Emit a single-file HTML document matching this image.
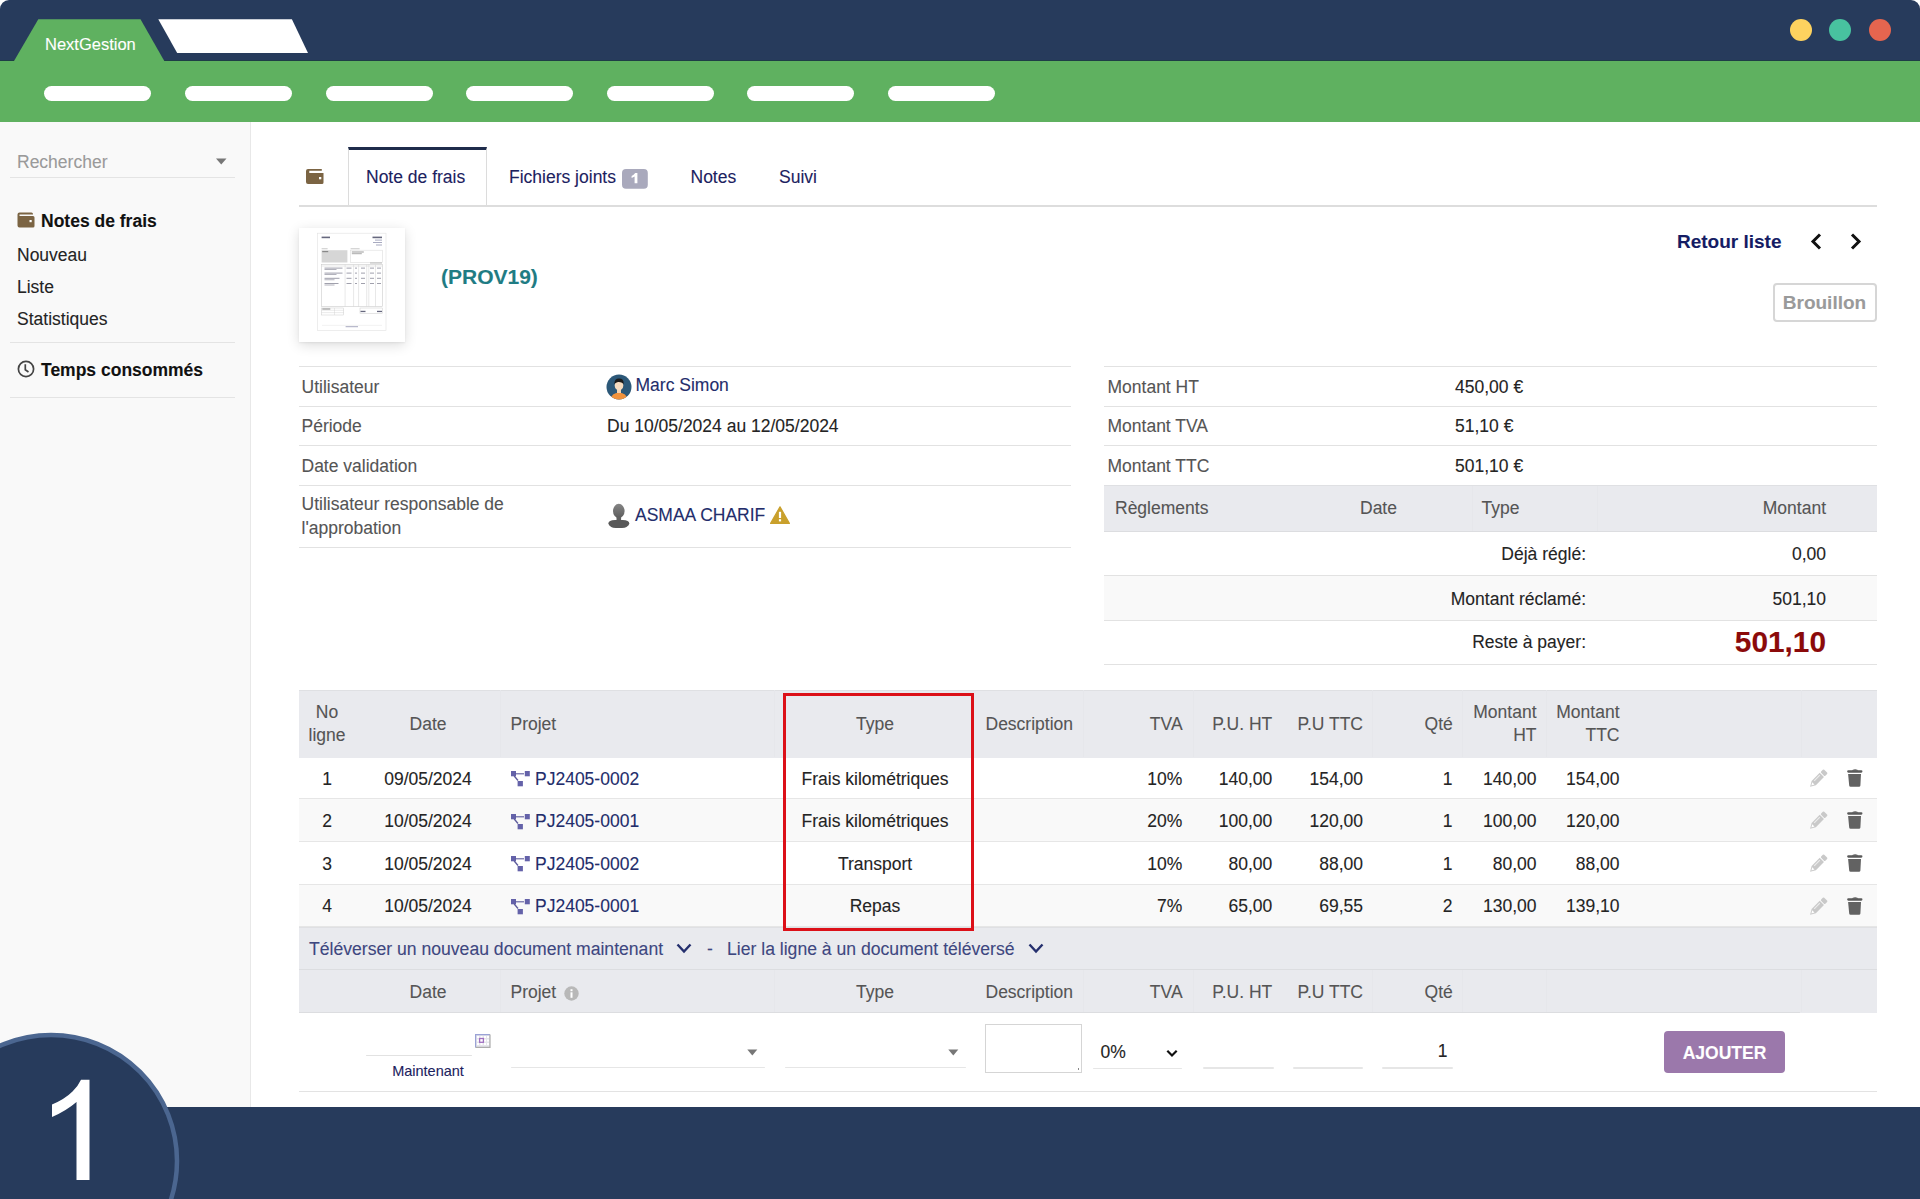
<!DOCTYPE html>
<html><head><meta charset="utf-8">
<style>
*{margin:0;padding:0;box-sizing:border-box}
html,body{width:1920px;height:1199px;overflow:hidden;background:#fff}
body{font-family:"Liberation Sans",sans-serif;font-size:17.5px;color:#222;position:relative;-webkit-text-stroke:0.1px currentColor}
.a{position:absolute;white-space:nowrap;line-height:1}
div.a:not([style*="height"]){padding-top:1.3px}
.navy{background:#273b5c}
#top{position:absolute;left:0;top:0;width:1920px;height:62px;background:#273b5c;border-radius:9px 9px 0 0}
#green{position:absolute;left:0;top:61px;width:1920px;height:61px;background:#5fb160}
.pill{position:absolute;top:86px;width:107px;height:15px;border-radius:8px;background:#fff}
.dot{position:absolute;top:19px;width:22px;height:22px;border-radius:50%}
#side{position:absolute;left:0;top:122px;width:251px;height:985px;background:#f9f9f9;border-right:1px solid #e8e8e8}
#bottom{position:absolute;left:0;top:1107px;width:1920px;height:92px;background:#273b5c}
.hl{position:absolute;height:1px;background:#e2e2e2}
.lbl{color:#555}
.lnk{color:#232d6b}
.hdr{position:absolute;background:#e9eaee}
.r{text-align:right}
.c{text-align:center}
</style></head><body>
<div id="top"></div>
<div id="green"></div>
<div class="hl" style="left:0;top:60px;width:1920px;background:#1e3d46"></div>
<svg class="a" style="left:0;top:0" width="320" height="62">
<polygon points="14,61 38.3,19.2 140.5,19.2 164.3,61" fill="#5fb160"/>
<polygon points="158.3,19.2 291.9,19.2 308,53.1 177.2,53.1" fill="#fff"/>
</svg>
<div class="a" style="left:45px;top:35px;font-size:16.5px;color:#fff">NextGestion</div>
<div class="pill" style="left:44px"></div>
<div class="pill" style="left:185px"></div>
<div class="pill" style="left:326px"></div>
<div class="pill" style="left:466px"></div>
<div class="pill" style="left:607px"></div>
<div class="pill" style="left:747px"></div>
<div class="pill" style="left:888px"></div>
<div class="dot" style="left:1790px;background:#fdd25f"></div>
<div class="dot" style="left:1829px;background:#48c29f"></div>
<div class="dot" style="left:1869px;background:#e5654f"></div>

<div id="side"></div>
<div class="a" style="left:17px;top:152.5px;color:#9a9a9a">Rechercher</div>
<svg class="a" style="left:216px;top:158px" width="11" height="7"><polygon points="0,0.5 10.5,0.5 5.25,6.5" fill="#777"/></svg>
<div class="hl" style="left:10px;top:177px;width:225px;background:#e4e4e4"></div>
<svg class="a" style="left:17px;top:212px" width="18" height="16" viewBox="0 0 18 16"><path d="M2.5,0.5 h12 a1.5,1.5 0 0 1 1.5,1.5 v0.5 h-13.5 v1.5 h13.5 a1.5 1.5 0 0 1 1.5 1.5 v8.5 a1.5 1.5 0 0 1 -1.5 1.5 h-13.5 a2 2 0 0 1 -2 -2 v-11 a2 2 0 0 1 2 -2z" fill="#7b6443"/><rect x="12.5" y="8" width="2.2" height="2.2" fill="#fff"/></svg>
<div class="a" style="left:41px;top:211.4px;font-weight:bold;color:#111">Notes de frais</div>
<div class="a" style="left:17px;top:245.7px;color:#242424">Nouveau</div>
<div class="a" style="left:17px;top:277.6px;color:#242424">Liste</div>
<div class="a" style="left:17px;top:309.3px;color:#242424">Statistiques</div>
<div class="hl" style="left:10px;top:342px;width:225px;background:#e4e4e4"></div>
<svg class="a" style="left:17px;top:360px" width="18" height="18" viewBox="0 0 18 18"><circle cx="9" cy="9" r="7.6" fill="none" stroke="#444" stroke-width="1.7"/><path d="M8.3,4.2 v5.6 l3.2,2.2" fill="none" stroke="#444" stroke-width="1.7"/></svg>
<div class="a" style="left:41px;top:360.9px;font-weight:bold;color:#111">Temps consommés</div>
<div class="hl" style="left:10px;top:397px;width:225px;background:#e4e4e4"></div>

<!-- TABS -->
<svg class="a" style="left:306px;top:168.8px" width="18" height="16" viewBox="0 0 18 16"><path d="M2,0 h13.8 v1.8 h-12.5 v2.2 h14.2 v9.5 a1.5 1.5 0 0 1 -1.5 1.5 h-14 a2 2 0 0 1 -2 -2 v-11 a2 2 0 0 1 2 -2z" fill="#7b6443"/><rect x="13" y="8" width="2.3" height="2.3" fill="#fff"/></svg>
<div class="a" style="left:348px;top:147px;width:139px;height:59px;border:1px solid #dcdcdc;border-top:3px solid #1f2c4b;border-bottom:none;background:#fff"></div>
<div class="hl" style="left:299px;top:204.5px;width:1578px;height:2px;background:#dddddd"></div>
<div class="a" style="left:366px;top:167.6px;color:#1c2260">Note de frais</div>
<div class="a" style="left:509px;top:167.4px;color:#1c2260">Fichiers joints</div>
<svg class="a" style="left:621.8px;top:168.8px" width="26" height="20" viewBox="0 0 26 20"><rect x="0" y="0" width="25.8" height="19.8" rx="4" fill="#a9a9bc"/><path d="M13.2,4 H15.4 V14.2 H12.6 V7.6 Q11.2,8.5 9.6,8.9 V7 Q11.8,6.2 13.2,4z" fill="#fff"/></svg>
<div class="a" style="left:690.5px;top:167.4px;color:#1c2260">Notes</div>
<div class="a" style="left:779px;top:167.4px;color:#1c2260">Suivi</div>

<!-- HEADER -->
<div class="a" style="left:299px;top:228px;width:106px;height:114px;background:#fff;box-shadow:0 3px 12px rgba(0,0,0,0.14),0 1px 2px rgba(0,0,0,0.06)"></div>
<svg class="a" style="left:299px;top:228px" width="106" height="114" viewBox="299 228 106 114">
<rect x="317.6" y="233.2" width="68.4" height="97.4" fill="#fff" stroke="#e2e2e2" stroke-width="0.6"/>
<rect x="321.6" y="236.6" width="8.4" height="1.6" fill="#66687e"/>
<rect x="372.5" y="236.6" width="9.5" height="1.6" fill="#66687e"/>
<rect x="375" y="239.6" width="7" height="1" fill="#a8aac0"/>
<rect x="373" y="242" width="9" height="1" fill="#a8aac0"/>
<rect x="376" y="244.5" width="6" height="1" fill="#a8aac0"/>
<rect x="321.6" y="248.4" width="6" height="0.8" fill="#bbb"/>
<rect x="350.6" y="248.4" width="9" height="0.8" fill="#bbb"/>
<rect x="321.6" y="250.2" width="25.8" height="12.3" fill="#d6d6d6"/>
<rect x="322.2" y="251" width="6" height="1.2" fill="#888"/>
<rect x="350.6" y="250.2" width="31.8" height="12.3" fill="none" stroke="#ddd" stroke-width="0.6"/>
<rect x="351.8" y="251.5" width="12" height="1" fill="#999"/>
<rect x="351.8" y="253.2" width="10" height="1" fill="#aaa"/>
<rect x="321.6" y="264.6" width="60.8" height="41.8" fill="none" stroke="#ccc" stroke-width="0.6"/>
<path d="M345.1,264.6 V306.4 M353.6,264.6 V306.4 M358.6,264.6 V306.4 M366.7,264.6 V306.4 M368.8,264.6 V306.4 M375.5,264.6 V306.4 M321.6,266 H382.4" stroke="#d0d0d0" stroke-width="0.5"/>
<rect x="370" y="262.6" width="12" height="0.8" fill="#aaa"/>
<g fill="#a0a0ac">
<rect x="324.5" y="267.6" width="18" height="1"/><rect x="324.5" y="269.2" width="12" height="0.8"/><rect x="346.5" y="267.6" width="5" height="1"/><rect x="355" y="267.6" width="2" height="1"/><rect x="361" y="267.6" width="4" height="1"/><rect x="370" y="267.6" width="4" height="1"/><rect x="377" y="267.6" width="4" height="1"/>
<rect x="324.5" y="272.6" width="18" height="1"/><rect x="324.5" y="274.2" width="12" height="0.8"/><rect x="346.5" y="272.6" width="5" height="1"/><rect x="355" y="272.6" width="2" height="1"/><rect x="361" y="272.6" width="4" height="1"/><rect x="370" y="272.6" width="4" height="1"/><rect x="377" y="272.6" width="4" height="1"/>
<rect x="324.5" y="277.8" width="15" height="1"/><rect x="324.5" y="279.4" width="10" height="0.8"/><rect x="346.5" y="277.8" width="5" height="1"/><rect x="355" y="277.8" width="2" height="1"/><rect x="361" y="277.8" width="4" height="1"/><rect x="370" y="277.8" width="4" height="1"/><rect x="377" y="277.8" width="4" height="1"/>
<rect x="324.5" y="283" width="14" height="1"/><rect x="324.5" y="284.6" width="10" height="0.8"/><rect x="346.5" y="283" width="5" height="1"/><rect x="355" y="283" width="2" height="1"/><rect x="361" y="283" width="4" height="1"/><rect x="370" y="283" width="4" height="1"/><rect x="377" y="283" width="4" height="1"/>
</g>
<rect x="321.6" y="308" width="22" height="7" fill="none" stroke="#ccc" stroke-width="0.5"/>
<path d="M334.5,308 V315 M321.6,310.3 H343.6 M321.6,312.6 H343.6" stroke="#ccc" stroke-width="0.4"/>
<rect x="322.3" y="308.5" width="8" height="1" fill="#888"/>
<rect x="360" y="308" width="22.5" height="5.5" fill="none" stroke="#ccc" stroke-width="0.5"/>
<rect x="360.5" y="310.8" width="5" height="1.3" fill="#66687e"/><rect x="377" y="310.8" width="5" height="1.3" fill="#66687e"/>
<path d="M322,325.4 H382" stroke="#e0e0e0" stroke-width="0.4"/>
<rect x="345.6" y="326.2" width="12.4" height="1" fill="#a8aac0"/>
</svg>
<div class="a" style="left:441px;top:264.4px;font-size:21px;font-weight:bold;color:#1f7c84">(PROV19)</div>
<div class="a" style="left:1677px;top:231.2px;font-size:19px;font-weight:bold;color:#151c64">Retour liste</div>
<svg class="a" style="left:1808px;top:231px" width="60" height="20"><path d="M12,3.5 L5,10.5 L12,17.5" fill="none" stroke="#111" stroke-width="3"/><path d="M44,3.5 L51,10.5 L44,17.5" fill="none" stroke="#111" stroke-width="3"/></svg>
<div class="a" style="left:1773px;top:283px;width:104px;height:39px;border:2px solid #d6d6d6;border-radius:4px"></div>
<div class="a" style="left:1782.8px;top:292.2px;font-size:19px;font-weight:bold;color:#9a9a9a">Brouillon</div>

<!-- LEFT INFO TABLE -->
<div class="hl" style="left:299px;top:366px;width:772px"></div>
<div class="hl" style="left:299px;top:405.5px;width:772px"></div>
<div class="hl" style="left:299px;top:445px;width:772px"></div>
<div class="hl" style="left:299px;top:484.5px;width:772px"></div>
<div class="hl" style="left:299px;top:547px;width:772px"></div>
<div class="a lbl" style="left:301.5px;top:378px">Utilisateur</div>
<div class="a lbl" style="left:301.5px;top:417px">Période</div>
<div class="a lbl" style="left:301.5px;top:456.5px">Date validation</div>
<div class="a lbl" style="left:301.5px;top:494.8px">Utilisateur responsable de</div>
<div class="a lbl" style="left:301.5px;top:518.7px">l'approbation</div>
<svg class="a" style="left:606px;top:373.5px" width="26" height="26" viewBox="0 0 26 26"><defs><clipPath id="cc"><circle cx="13" cy="13" r="12.5"/></clipPath></defs><circle cx="13" cy="13" r="12.5" fill="#2c5878"/><g clip-path="url(#cc)"><path d="M4,27 Q5,19 13,18.5 Q21,19 22,27z" fill="#f0923c"/><rect x="11" y="15" width="4" height="4" fill="#f4d2b0"/><ellipse cx="13" cy="11.5" rx="4.3" ry="5" fill="#f6dcc0"/><path d="M8.3,10 Q8.5,4.5 13,4.6 Q17.8,4.5 17.7,10 Q15,7.5 12,8 Q10,8.5 8.3,10z" fill="#1b1b1b"/></g></svg>
<div class="a lnk" style="left:635.5px;top:376.2px">Marc Simon</div>
<div class="a" style="left:607px;top:416.8px;color:#242424">Du 10/05/2024 au 12/05/2024</div>
<svg class="a" style="left:607px;top:503px" width="24" height="26" viewBox="0 0 24 26"><defs><linearGradient id="pg" x1="0" y1="0" x2="0" y2="1"><stop offset="0" stop-color="#858585"/><stop offset="1" stop-color="#5c5c5c"/></linearGradient></defs><ellipse cx="11.8" cy="8" rx="5.8" ry="7.2" fill="url(#pg)"/><rect x="9.5" y="13" width="4.6" height="5" fill="#606060"/><path d="M1.4,20.5 Q1.4,16.9 8,16.9 H15.7 Q22.3,16.9 22.3,20.5 Q22.3,22 19.5,24 Q18,25 15,25 H8.7 Q5.7,25 4.2,24 Q1.4,22 1.4,20.5z" fill="#585858"/></svg>
<div class="a lnk" style="left:635px;top:506.2px">ASMAA CHARIF</div>
<svg class="a" style="left:770px;top:506px" width="20" height="18" viewBox="0 0 20 18"><path d="M10,0.8 L19.4,17.4 L0.6,17.4z" fill="#c9a02c" stroke="#c9a02c" stroke-width="1.2" stroke-linejoin="round"/><rect x="8.9" y="5.8" width="2.2" height="6.2" fill="#fff"/><rect x="8.9" y="13.2" width="2.2" height="2.2" fill="#fff"/></svg>

<!-- RIGHT INFO TABLE -->
<div class="hl" style="left:1104px;top:366px;width:773px"></div>
<div class="hl" style="left:1104px;top:405.5px;width:773px"></div>
<div class="hl" style="left:1104px;top:445px;width:773px"></div>
<div class="a lbl" style="left:1107.5px;top:378px">Montant HT</div>
<div class="a lbl" style="left:1107.5px;top:417px">Montant TVA</div>
<div class="a lbl" style="left:1107.5px;top:456.5px">Montant TTC</div>
<div class="a" style="left:1455px;top:378px;color:#242424">450,00 €</div>
<div class="a" style="left:1455px;top:417px;color:#242424">51,10 €</div>
<div class="a" style="left:1455px;top:456.5px;color:#242424">501,10 €</div>
<div class="hdr" style="left:1104px;top:484.5px;width:773px;height:47px;border-top:1px solid #dfe0e3;border-bottom:1px solid #dcdde0"></div>
<div class="a" style="left:1472px;top:486px;width:1px;height:45px;background:#e6e7eb"></div>
<div class="a" style="left:1597px;top:486px;width:1px;height:45px;background:#e6e7eb"></div>
<div class="a lbl" style="left:1115px;top:498.5px">Règlements</div>
<div class="a lbl" style="left:1360px;top:498.5px">Date</div>
<div class="a lbl" style="left:1481.5px;top:498.5px">Type</div>
<div class="a lbl r" style="left:1726px;width:100px;top:498.5px">Montant</div>
<div class="hl" style="left:1104px;top:575px;width:773px"></div>
<div class="a" style="left:1104px;top:576px;width:773px;height:43.5px;background:#f9f9f9"></div>
<div class="hl" style="left:1104px;top:619.5px;width:773px"></div>
<div class="hl" style="left:1104px;top:664px;width:773px"></div>
<div class="a r" style="left:1386px;width:200px;top:545.2px;color:#242424">Déjà réglé:</div>
<div class="a r" style="left:1626px;width:200px;top:545.2px;color:#242424">0,00</div>
<div class="a r" style="left:1386px;width:200px;top:589.6px;color:#242424">Montant réclamé:</div>
<div class="a r" style="left:1626px;width:200px;top:589.6px;color:#242424">501,10</div>
<div class="a r" style="left:1386px;width:200px;top:632.9px;color:#242424">Reste à payer:</div>
<div class="a r" style="left:1626px;width:200px;top:625.6px;color:#8b0a0a;font-size:29.8px;font-weight:bold">501,10</div>

<!-- LINE TABLE -->
<div class="hdr" style="left:299px;top:689.5px;width:1578px;height:68px;border-top:1px solid #dfe0e3"></div>
<div class="a" style="left:499.5px;top:690px;width:1px;height:67px;background:#e6e7eb"></div>
<div class="a" style="left:774px;top:690px;width:1px;height:67px;background:#e6e7eb"></div>
<div class="a" style="left:1083px;top:690px;width:1px;height:67px;background:#e6e7eb"></div>
<div class="a" style="left:1192.5px;top:690px;width:1px;height:67px;background:#e6e7eb"></div>
<div class="a" style="left:1371.5px;top:690px;width:1px;height:67px;background:#e6e7eb"></div>
<div class="a" style="left:1462px;top:690px;width:1px;height:67px;background:#e6e7eb"></div>
<div class="a" style="left:1545.5px;top:690px;width:1px;height:67px;background:#e6e7eb"></div>
<div class="a" style="left:1800.5px;top:690px;width:1px;height:67px;background:#e6e7eb"></div>
<div class="a lbl" style="top:702.7px;left:287.0px;width:80px;text-align:center;">No</div>
<div class="a lbl" style="top:726.2px;left:287.0px;width:80px;text-align:center;">ligne</div>
<div class="a lbl" style="top:714.9px;left:368.0px;width:120px;text-align:center;">Date</div>
<div class="a lbl" style="top:714.9px;left:510.5px;">Projet</div>
<div class="a lbl" style="top:714.9px;left:795.0px;width:160px;text-align:center;">Type</div>
<div class="a lbl" style="top:714.9px;left:985.5px;">Description</div>
<div class="a lbl" style="top:714.9px;left:982.5999999999999px;width:200px;text-align:right;">TVA</div>
<div class="a lbl" style="top:714.9px;left:1072.3px;width:200px;text-align:right;">P.U. HT</div>
<div class="a lbl" style="top:714.9px;left:1163px;width:200px;text-align:right;">P.U TTC</div>
<div class="a lbl" style="top:714.9px;left:1252.8px;width:200px;text-align:right;">Qté</div>
<div class="a lbl" style="top:702.7px;left:1336.5px;width:200px;text-align:right;">Montant</div>
<div class="a lbl" style="top:726.2px;left:1336.5px;width:200px;text-align:right;">HT</div>
<div class="a lbl" style="top:702.7px;left:1419.5px;width:200px;text-align:right;">Montant</div>
<div class="a lbl" style="top:726.2px;left:1419.5px;width:200px;text-align:right;">TTC</div>
<div class="hl" style="left:299px;top:798.1px;width:1578px;background:#e6e6e6"></div>
<div class="a " style="top:769.6px;left:297.0px;width:60px;text-align:center;color:#242424;">1</div>
<div class="a " style="top:769.6px;left:368.0px;width:120px;text-align:center;color:#242424;">09/05/2024</div>
<svg class="a" style="left:510px;top:770.4px" width="21" height="17" viewBox="0 0 21 17"><rect x="1" y="1" width="5" height="5.3" fill="#6462a9"/><rect x="14.8" y="1" width="5" height="5.3" fill="#6462a9"/><rect x="7.6" y="11" width="5.3" height="5.3" fill="#6462a9"/><path d="M5,3.8 H14" stroke="#5d5b9c" stroke-width="1.1"/><path d="M4.2,6 L8,10.5" stroke="#5d5b9c" stroke-width="1.3"/></svg>
<div class="a lnk" style="top:769.6px;left:535px;">PJ2405-0002</div>
<div class="a " style="top:769.6px;left:780.0px;width:190px;text-align:center;color:#242424;">Frais kilométriques</div>
<div class="a " style="top:769.6px;left:982.3px;width:200px;text-align:right;color:#242424;">10%</div>
<div class="a " style="top:769.6px;left:1072.3px;width:200px;text-align:right;color:#242424;">140,00</div>
<div class="a " style="top:769.6px;left:1163px;width:200px;text-align:right;color:#242424;">154,00</div>
<div class="a " style="top:769.6px;left:1252.5px;width:200px;text-align:right;color:#242424;">1</div>
<div class="a " style="top:769.6px;left:1336.5px;width:200px;text-align:right;color:#242424;">140,00</div>
<div class="a " style="top:769.6px;left:1419.5px;width:200px;text-align:right;color:#242424;">154,00</div>
<svg class="a" style="left:1806px;top:765.0px" width="26" height="26"><g transform="translate(4.1,21.7) rotate(-45)"><path d="M0,0 L5.2,-3 H16.6 V3 H5.2 Z" fill="#c9c9c9"/><path d="M1.8,0 L4.6,-1.6 V1.6 Z" fill="#fff"/><rect x="7" y="-1.8" width="8" height="1.1" fill="#ececec"/><rect x="17.6" y="-3" width="4.4" height="6" rx="1" fill="#c9c9c9"/></g></svg>
<svg class="a" style="left:1846px;top:768.9px" width="18" height="19" viewBox="0 0 18 19"><path d="M2.3,2.5 H15.3" stroke="#5a5a5a" stroke-width="2.3" stroke-linecap="round"/><path d="M5.9,1.8 Q6.2,0.2 9.1,0.2 Q12,0.2 12.3,1.8z" fill="#5a5a5a"/><path d="M2.1,5.1 H15 L14.4,16.6 Q14.3,17.8 13,17.8 H4.6 Q3.3,17.8 3.2,16.6z" fill="#626262"/></svg>
<div class="a" style="left:299px;top:799.1px;width:1578px;height:42.4px;background:#f9f9f9"></div>
<div class="hl" style="left:299px;top:840.5px;width:1578px;background:#e6e6e6"></div>
<div class="a " style="top:811.8px;left:297.0px;width:60px;text-align:center;color:#242424;">2</div>
<div class="a " style="top:811.8px;left:368.0px;width:120px;text-align:center;color:#242424;">10/05/2024</div>
<svg class="a" style="left:510px;top:812.6px" width="21" height="17" viewBox="0 0 21 17"><rect x="1" y="1" width="5" height="5.3" fill="#6462a9"/><rect x="14.8" y="1" width="5" height="5.3" fill="#6462a9"/><rect x="7.6" y="11" width="5.3" height="5.3" fill="#6462a9"/><path d="M5,3.8 H14" stroke="#5d5b9c" stroke-width="1.1"/><path d="M4.2,6 L8,10.5" stroke="#5d5b9c" stroke-width="1.3"/></svg>
<div class="a lnk" style="top:811.8px;left:535px;">PJ2405-0001</div>
<div class="a " style="top:811.8px;left:780.0px;width:190px;text-align:center;color:#242424;">Frais kilométriques</div>
<div class="a " style="top:811.8px;left:982.3px;width:200px;text-align:right;color:#242424;">20%</div>
<div class="a " style="top:811.8px;left:1072.3px;width:200px;text-align:right;color:#242424;">100,00</div>
<div class="a " style="top:811.8px;left:1163px;width:200px;text-align:right;color:#242424;">120,00</div>
<div class="a " style="top:811.8px;left:1252.5px;width:200px;text-align:right;color:#242424;">1</div>
<div class="a " style="top:811.8px;left:1336.5px;width:200px;text-align:right;color:#242424;">100,00</div>
<div class="a " style="top:811.8px;left:1419.5px;width:200px;text-align:right;color:#242424;">120,00</div>
<svg class="a" style="left:1806px;top:807.2px" width="26" height="26"><g transform="translate(4.1,21.7) rotate(-45)"><path d="M0,0 L5.2,-3 H16.6 V3 H5.2 Z" fill="#c9c9c9"/><path d="M1.8,0 L4.6,-1.6 V1.6 Z" fill="#fff"/><rect x="7" y="-1.8" width="8" height="1.1" fill="#ececec"/><rect x="17.6" y="-3" width="4.4" height="6" rx="1" fill="#c9c9c9"/></g></svg>
<svg class="a" style="left:1846px;top:811.1px" width="18" height="19" viewBox="0 0 18 19"><path d="M2.3,2.5 H15.3" stroke="#5a5a5a" stroke-width="2.3" stroke-linecap="round"/><path d="M5.9,1.8 Q6.2,0.2 9.1,0.2 Q12,0.2 12.3,1.8z" fill="#5a5a5a"/><path d="M2.1,5.1 H15 L14.4,16.6 Q14.3,17.8 13,17.8 H4.6 Q3.3,17.8 3.2,16.6z" fill="#626262"/></svg>
<div class="hl" style="left:299px;top:884.3px;width:1578px;background:#e6e6e6"></div>
<div class="a " style="top:854.5px;left:297.0px;width:60px;text-align:center;color:#242424;">3</div>
<div class="a " style="top:854.5px;left:368.0px;width:120px;text-align:center;color:#242424;">10/05/2024</div>
<svg class="a" style="left:510px;top:855.3px" width="21" height="17" viewBox="0 0 21 17"><rect x="1" y="1" width="5" height="5.3" fill="#6462a9"/><rect x="14.8" y="1" width="5" height="5.3" fill="#6462a9"/><rect x="7.6" y="11" width="5.3" height="5.3" fill="#6462a9"/><path d="M5,3.8 H14" stroke="#5d5b9c" stroke-width="1.1"/><path d="M4.2,6 L8,10.5" stroke="#5d5b9c" stroke-width="1.3"/></svg>
<div class="a lnk" style="top:854.5px;left:535px;">PJ2405-0002</div>
<div class="a " style="top:854.5px;left:780.0px;width:190px;text-align:center;color:#242424;">Transport</div>
<div class="a " style="top:854.5px;left:982.3px;width:200px;text-align:right;color:#242424;">10%</div>
<div class="a " style="top:854.5px;left:1072.3px;width:200px;text-align:right;color:#242424;">80,00</div>
<div class="a " style="top:854.5px;left:1163px;width:200px;text-align:right;color:#242424;">88,00</div>
<div class="a " style="top:854.5px;left:1252.5px;width:200px;text-align:right;color:#242424;">1</div>
<div class="a " style="top:854.5px;left:1336.5px;width:200px;text-align:right;color:#242424;">80,00</div>
<div class="a " style="top:854.5px;left:1419.5px;width:200px;text-align:right;color:#242424;">88,00</div>
<svg class="a" style="left:1806px;top:849.9px" width="26" height="26"><g transform="translate(4.1,21.7) rotate(-45)"><path d="M0,0 L5.2,-3 H16.6 V3 H5.2 Z" fill="#c9c9c9"/><path d="M1.8,0 L4.6,-1.6 V1.6 Z" fill="#fff"/><rect x="7" y="-1.8" width="8" height="1.1" fill="#ececec"/><rect x="17.6" y="-3" width="4.4" height="6" rx="1" fill="#c9c9c9"/></g></svg>
<svg class="a" style="left:1846px;top:853.8px" width="18" height="19" viewBox="0 0 18 19"><path d="M2.3,2.5 H15.3" stroke="#5a5a5a" stroke-width="2.3" stroke-linecap="round"/><path d="M5.9,1.8 Q6.2,0.2 9.1,0.2 Q12,0.2 12.3,1.8z" fill="#5a5a5a"/><path d="M2.1,5.1 H15 L14.4,16.6 Q14.3,17.8 13,17.8 H4.6 Q3.3,17.8 3.2,16.6z" fill="#626262"/></svg>
<div class="a" style="left:299px;top:885.3px;width:1578px;height:41.8px;background:#f9f9f9"></div>
<div class="hl" style="left:299px;top:926.1px;width:1578px;background:#e6e6e6"></div>
<div class="a " style="top:897.2px;left:297.0px;width:60px;text-align:center;color:#242424;">4</div>
<div class="a " style="top:897.2px;left:368.0px;width:120px;text-align:center;color:#242424;">10/05/2024</div>
<svg class="a" style="left:510px;top:898.0px" width="21" height="17" viewBox="0 0 21 17"><rect x="1" y="1" width="5" height="5.3" fill="#6462a9"/><rect x="14.8" y="1" width="5" height="5.3" fill="#6462a9"/><rect x="7.6" y="11" width="5.3" height="5.3" fill="#6462a9"/><path d="M5,3.8 H14" stroke="#5d5b9c" stroke-width="1.1"/><path d="M4.2,6 L8,10.5" stroke="#5d5b9c" stroke-width="1.3"/></svg>
<div class="a lnk" style="top:897.2px;left:535px;">PJ2405-0001</div>
<div class="a " style="top:897.2px;left:780.0px;width:190px;text-align:center;color:#242424;">Repas</div>
<div class="a " style="top:897.2px;left:982.3px;width:200px;text-align:right;color:#242424;">7%</div>
<div class="a " style="top:897.2px;left:1072.3px;width:200px;text-align:right;color:#242424;">65,00</div>
<div class="a " style="top:897.2px;left:1163px;width:200px;text-align:right;color:#242424;">69,55</div>
<div class="a " style="top:897.2px;left:1252.5px;width:200px;text-align:right;color:#242424;">2</div>
<div class="a " style="top:897.2px;left:1336.5px;width:200px;text-align:right;color:#242424;">130,00</div>
<div class="a " style="top:897.2px;left:1419.5px;width:200px;text-align:right;color:#242424;">139,10</div>
<svg class="a" style="left:1806px;top:892.6px" width="26" height="26"><g transform="translate(4.1,21.7) rotate(-45)"><path d="M0,0 L5.2,-3 H16.6 V3 H5.2 Z" fill="#c9c9c9"/><path d="M1.8,0 L4.6,-1.6 V1.6 Z" fill="#fff"/><rect x="7" y="-1.8" width="8" height="1.1" fill="#ececec"/><rect x="17.6" y="-3" width="4.4" height="6" rx="1" fill="#c9c9c9"/></g></svg>
<svg class="a" style="left:1846px;top:896.5px" width="18" height="19" viewBox="0 0 18 19"><path d="M2.3,2.5 H15.3" stroke="#5a5a5a" stroke-width="2.3" stroke-linecap="round"/><path d="M5.9,1.8 Q6.2,0.2 9.1,0.2 Q12,0.2 12.3,1.8z" fill="#5a5a5a"/><path d="M2.1,5.1 H15 L14.4,16.6 Q14.3,17.8 13,17.8 H4.6 Q3.3,17.8 3.2,16.6z" fill="#626262"/></svg>
<div class="hdr" style="left:299px;top:927px;width:1578px;height:43px;border-top:1px solid #dfe0e3;border-bottom:1px solid #dcdde0"></div>
<div class="a " style="top:939.6px;left:309px;color:#3e4780;font-size:17.6px;">Téléverser un nouveau document maintenant</div>
<svg class="a" style="left:676px;top:943px" width="16" height="11" viewBox="0 0 16 11"><path d="M1.5,1.5 L8,8.5 L14.5,1.5" fill="none" stroke="#25306e" stroke-width="2.4"/></svg>
<div class="a " style="top:939.6px;left:707px;color:#3e4780;">-</div>
<div class="a " style="top:939.6px;left:727px;color:#3e4780;font-size:17.6px;">Lier la ligne à un document téléversé</div>
<svg class="a" style="left:1028px;top:943px" width="16" height="11" viewBox="0 0 16 11"><path d="M1.5,1.5 L8,8.5 L14.5,1.5" fill="none" stroke="#25306e" stroke-width="2.4"/></svg>
<div class="hdr" style="left:299px;top:970px;width:1578px;height:42.5px"></div>
<div class="a" style="left:299px;top:1011.5px;width:1501px;height:1px;background:#dcdde0"></div>
<div class="a" style="left:499.5px;top:970px;width:1px;height:42px;background:#e6e7eb"></div>
<div class="a" style="left:774px;top:970px;width:1px;height:42px;background:#e6e7eb"></div>
<div class="a" style="left:1083px;top:970px;width:1px;height:42px;background:#e6e7eb"></div>
<div class="a" style="left:1192.5px;top:970px;width:1px;height:42px;background:#e6e7eb"></div>
<div class="a" style="left:1371.5px;top:970px;width:1px;height:42px;background:#e6e7eb"></div>
<div class="a" style="left:1462px;top:970px;width:1px;height:42px;background:#e6e7eb"></div>
<div class="a" style="left:1545.5px;top:970px;width:1px;height:42px;background:#e6e7eb"></div>
<div class="a" style="left:1800.5px;top:970px;width:1px;height:42px;background:#e6e7eb"></div>
<div class="a lbl" style="top:982.5px;left:368.0px;width:120px;text-align:center;">Date</div>
<div class="a lbl" style="top:982.5px;left:510.5px;">Projet</div>
<svg class="a" style="left:564px;top:985.5px" width="15" height="15" viewBox="0 0 15 15"><circle cx="7.5" cy="7.5" r="7.2" fill="#b8b8b8"/><rect x="6.5" y="6.3" width="2" height="5.5" fill="#fff"/><rect x="6.5" y="3.2" width="2" height="2" fill="#fff"/></svg>
<div class="a lbl" style="top:982.5px;left:795.0px;width:160px;text-align:center;">Type</div>
<div class="a lbl" style="top:982.5px;left:985.5px;">Description</div>
<div class="a lbl" style="top:982.5px;left:982.5999999999999px;width:200px;text-align:right;">TVA</div>
<div class="a lbl" style="top:982.5px;left:1072.3px;width:200px;text-align:right;">P.U. HT</div>
<div class="a lbl" style="top:982.5px;left:1163px;width:200px;text-align:right;">P.U TTC</div>
<div class="a lbl" style="top:982.5px;left:1252.8px;width:200px;text-align:right;">Qté</div>
<div class="hl" style="left:299px;top:1090.5px;width:1578px;background:#e3e3e3"></div>
<div class="a" style="left:365.5px;top:1054.5px;width:106px;height:1.5px;background:#e2e2e2;border-radius:1px"></div>
<svg class="a" style="left:474.5px;top:1033.5px" width="16" height="14" viewBox="0 0 16 14"><rect x="0.5" y="0.5" width="14.5" height="13" fill="#e6e6ec"/><g fill="#fff"><rect x="2" y="2" width="2" height="2"/><rect x="5.5" y="2" width="2" height="2"/><rect x="9" y="2" width="2" height="2"/><rect x="12" y="2" width="2" height="2"/><rect x="2" y="5.5" width="2" height="2"/><rect x="9" y="5.5" width="2" height="2"/><rect x="12" y="5.5" width="2" height="2"/><rect x="2" y="9" width="2" height="2"/><rect x="5.5" y="9" width="2" height="2"/><rect x="9" y="9" width="2" height="2"/><rect x="12" y="9" width="2" height="2"/></g><rect x="4.6" y="4.5" width="3.8" height="3.8" fill="#fff" stroke="#a070c0" stroke-width="1.3"/><path d="M0.6,13.4 V0.6 H15" fill="none" stroke="#9aa2d6" stroke-width="1.2"/><path d="M15,0.6 V13.4 H0.6" fill="none" stroke="#acacac" stroke-width="1.2"/></svg>
<div class="a " style="top:1062.3px;left:368.0px;width:120px;text-align:center;color:#1c2260;font-size:14.5px;">Maintenant</div>
<div class="a" style="left:510.5px;top:1066.5px;width:254.5px;height:1.5px;background:#e6e6e6;border-radius:1px"></div>
<svg class="a" style="left:746.5px;top:1048.5px" width="11" height="7"><polygon points="0.3,0.5 10.3,0.5 5.3,6.4" fill="#777"/></svg>
<div class="a" style="left:785px;top:1066.5px;width:180.5px;height:1.5px;background:#e6e6e6;border-radius:1px"></div>
<svg class="a" style="left:947.5px;top:1048.5px" width="11" height="7"><polygon points="0.3,0.5 10.3,0.5 5.3,6.4" fill="#777"/></svg>
<div class="a" style="left:985px;top:1023.5px;width:97px;height:49px;border:1px solid #d5d5d5;background:#fff"></div>
<div class="a" style="left:1077.5px;top:1068px;width:1.5px;height:1.5px;background:#888"></div>
<div class="a " style="top:1042.6px;left:1100.5px;color:#242424;">0%</div>
<svg class="a" style="left:1166px;top:1048.5px" width="12" height="9" viewBox="0 0 12 9"><path d="M1.3,1.8 L6,6.5 L10.7,1.8" fill="none" stroke="#111" stroke-width="2.2"/></svg>
<div class="a" style="left:1093px;top:1067.5px;width:89px;height:1.5px;background:#e6e6e6;border-radius:1px"></div>
<div class="a" style="left:1202.8px;top:1067px;width:71.0px;height:1.5px;background:#e6e6e6;border-radius:1px"></div>
<div class="a" style="left:1292.8px;top:1067px;width:70.4px;height:1.5px;background:#e6e6e6;border-radius:1px"></div>
<div class="a" style="left:1382px;top:1067px;width:71.2px;height:1.5px;background:#e6e6e6;border-radius:1px"></div>
<div class="a " style="top:1042.1px;left:1417.5px;width:30px;text-align:right;color:#242424;">1</div>
<div class="a" style="left:1664px;top:1031px;width:121px;height:42px;border-radius:4px;background:#9b78ab"></div>
<div class="a " style="top:1044.2px;left:1664.0px;width:121px;text-align:center;color:#fff;font-weight:bold;">AJOUTER</div>
<div class="a" style="left:783px;top:693px;width:191px;height:238px;border:3px solid #dc1018"></div>
<div id="bottom"></div>
<svg class="a" style="left:0;top:1000px" width="200" height="199"><circle cx="51" cy="161" r="126" fill="#273b5c" stroke="#4b6690" stroke-width="4.5"/><path d="M81,79.8 L89.5,79.8 L89.5,180 L76.5,180 L76.5,102 Q66,111 52,117 L52,104.5 Q65,99 72.5,91.5 Q78.5,85.5 81,79.8 Z" fill="#fff"/></svg>

</body></html>
